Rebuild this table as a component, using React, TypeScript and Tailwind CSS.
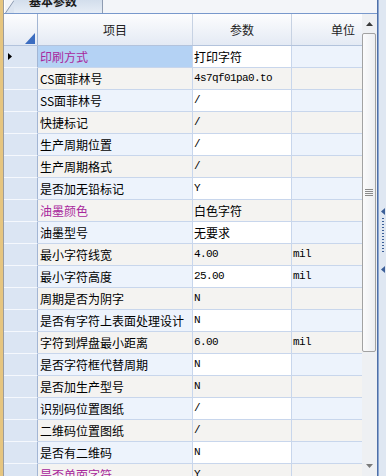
import React from 'react';

type Row = { name: string; value: string; unit?: string; accent?: boolean };

const rows: Row[] = [
  { name: '印刷方式', value: '打印字符', accent: true },
  { name: 'CS面菲林号', value: '4s7qf01pa0.to' },
  { name: 'SS面菲林号', value: '/' },
  { name: '快捷标记', value: '/' },
  { name: '生产周期位置', value: '/' },
  { name: '生产周期格式', value: '/' },
  { name: '是否加无铅标记', value: 'Y' },
  { name: '油墨颜色', value: '白色字符', accent: true },
  { name: '油墨型号', value: '无要求' },
  { name: '最小字符线宽', value: '4.00', unit: 'mil' },
  { name: '最小字符高度', value: '25.00', unit: 'mil' },
  { name: '周期是否为阴字', value: 'N' },
  { name: '是否有字符上表面处理设计', value: 'N' },
  { name: '字符到焊盘最小距离', value: '6.00', unit: 'mil' },
  { name: '是否字符框代替周期', value: 'N' },
  { name: '是否加生产型号', value: 'N' },
  { name: '识别码位置图纸', value: '/' },
  { name: '二维码位置图纸', value: '/' },
  { name: '是否有二维码', value: 'N' },
  { name: '是否单面字符', value: 'Y', accent: true },
];

const cjk = "font-['Noto_Sans_CJK_SC','Noto_Sans',sans-serif]";
const mono = "font-['Liberation_Mono','DejaVu_Sans_Mono',monospace]";

// latin-only values are drawn in the narrow fixed font, chinese ones in the CJK font
const isLatin = (s: string) => /^[\x00-\x7f]*$/.test(s);

const GridRow: React.FC<{ row: Row; index: number }> = ({ row, index }) => {
  const selected = index === 0;
  const odd = index % 2 === 1;
  const side = odd ? 'bg-[#f4f3f1]' : 'bg-[#edf3fc]';
  const mid = odd ? 'bg-[#f4f3f1]' : 'bg-white';

  return (
    <div className="grid grid-cols-[34px_155px_99px_70px] h-[22px]">
      <div className="flex items-center pl-[4px] bg-[#dbe5f3] border-b border-b-[#f5f8fd] border-r border-r-[#a3b6d4]">
        {selected && (
          <svg width="4" height="7" viewBox="0 0 4 7">
            <path d="M0 0 L4 3.5 L0 7 Z" fill="#000" />
          </svg>
        )}
      </div>
      <div
        className={`flex items-center pl-[2px] border-b border-r border-[#c8d6ec] overflow-hidden whitespace-nowrap text-[12px] leading-[14px] ${cjk} ${
          selected ? 'bg-[#b4d2f4]' : side
        } ${row.accent ? 'text-[#a8279c]' : 'text-black'}`}
      >
        {row.name}
      </div>
      <div
        className={`flex items-center pl-[1px] border-b border-r border-[#c8d6ec] overflow-hidden whitespace-nowrap text-black ${mid} ${
          isLatin(row.value) ? `${mono} text-[11px] tracking-[-0.6px]` : `${cjk} text-[12px]`
        }`}
      >
        {row.value}
      </div>
      <div className={`flex items-center pl-[1px] border-b border-[#c8d6ec] text-black text-[11px] tracking-[-0.6px] ${mono} ${side}`}>
        {row.unit}
      </div>
    </div>
  );
};

export default function App() {
  return (
    <div className="w-[386px] h-[476px] overflow-hidden flex bg-white">
      <div className="w-[3px] shrink-0 bg-[#e6c57f]" />
      <div className="w-px shrink-0 bg-[#9c9c9c]" />

      <div className="w-[373px] shrink-0 flex flex-col">
        {/* Tab strip */}
        <div className="h-[13px] flex bg-[#f2f4f8]">
          <div className="w-px bg-white" />
          <svg width="9" height="13" viewBox="0 0 9 13" className="shrink-0">
            <path d="M0 13 L9 0 L9 13 Z" fill="#dbe4f0" />
            <path d="M0.5 13 L9 0.5" stroke="#8e9cb2" strokeWidth="1" />
          </svg>
          <div className="w-[89px] h-[13px] overflow-hidden bg-gradient-to-b from-[#d3deec] to-[#e6edf6] border-r border-[#8e9cb2] flex justify-center pr-[10px]">
            <span className={`-mt-[5px] leading-[12px] text-[12px] font-bold text-[#1a1a1a] ${cjk}`}>基本参数</span>
          </div>
          <div className="flex-1 bg-[#f3f5f9]" />
        </div>
        <div className="h-px bg-[#7898cc]" />

        <div className="flex flex-1 min-h-0">
          {/* Grid */}
          <div className="w-[358px] shrink-0 overflow-hidden">
            <div className="grid grid-cols-[34px_155px_99px_70px] h-[32px] bg-gradient-to-b from-[#fdfdfe] to-[#e4eaf4] border-b border-[#b3c3dc]">
              <div className="relative border-r border-[#a3b6d4]">
                <svg width="10" height="11" viewBox="0 0 10 11" className="absolute right-[2px] bottom-[1px]">
                  <path d="M10 0 L10 11 L0 11 Z" fill="#3c6dc0" />
                </svg>
              </div>
              <div className={`flex items-center justify-center border-r border-[#c7d2e3] text-[12px] text-[#222] ${cjk}`}>项目</div>
              <div className={`flex items-center justify-center border-r border-[#c7d2e3] text-[12px] text-[#222] ${cjk}`}>参数</div>
              <div className={`flex items-center justify-end pr-[7px] text-[12px] text-[#222] ${cjk}`}>单位</div>
            </div>
            {rows.map((row, i) => (
              <GridRow key={row.name} row={row} index={i} />
            ))}
          </div>

          {/* Vertical scrollbar */}
          <div className="w-[15px] shrink-0 flex flex-col bg-[#eef0f3]">
            <div className="h-[19px] flex items-center justify-center">
              <svg width="7" height="4" viewBox="0 0 7 4">
                <path d="M0 4 L3.5 0 L7 4 Z" fill="#3a3a3a" />
              </svg>
            </div>
            <div className="h-[319px] mr-px flex items-center justify-center border border-[#a2a2a2] rounded-[2px] bg-gradient-to-r from-[#fbfbfc] to-[#eceef1]">
              <div className="flex flex-col gap-[1px]">
                <div className="w-[8px] h-px bg-[#8a8a8a]" />
                <div className="w-[8px] h-px bg-[#8a8a8a]" />
                <div className="w-[8px] h-px bg-[#8a8a8a]" />
                <div className="w-[8px] h-px bg-[#8a8a8a]" />
              </div>
            </div>
            <div className="flex-1" />
            <div className="h-[20px] flex items-center justify-center">
              <svg width="7" height="4" viewBox="0 0 7 4">
                <path d="M0 0 L3.5 4 L7 0 Z" fill="#7a7a7a" />
              </svg>
            </div>
          </div>
        </div>
      </div>

      {/* Splitter */}
      <div className="w-px shrink-0 bg-[#4e6fa8]" />
      <div className="w-px shrink-0 bg-[#8ba6d0]" />
      <div className="flex-1 bg-[#dfe7f2] flex flex-col items-center pt-[208px]">
        <svg width="4" height="7" viewBox="0 0 4 7">
          <path d="M4 0 L0 3.5 L4 7 Z" fill="#3c5f98" />
        </svg>
        <div className="mt-[3px] flex flex-col gap-[2px]">
          {Array.from({ length: 12 }).map((_, i) => (
            <div key={i} className="w-[2px] h-px bg-[#3c5f98]" />
          ))}
        </div>
        <div className="mt-[14px]">
          <svg width="4" height="7" viewBox="0 0 4 7">
            <path d="M4 0 L0 3.5 L4 7 Z" fill="#3c5f98" />
          </svg>
        </div>
      </div>
    </div>
  );
}
